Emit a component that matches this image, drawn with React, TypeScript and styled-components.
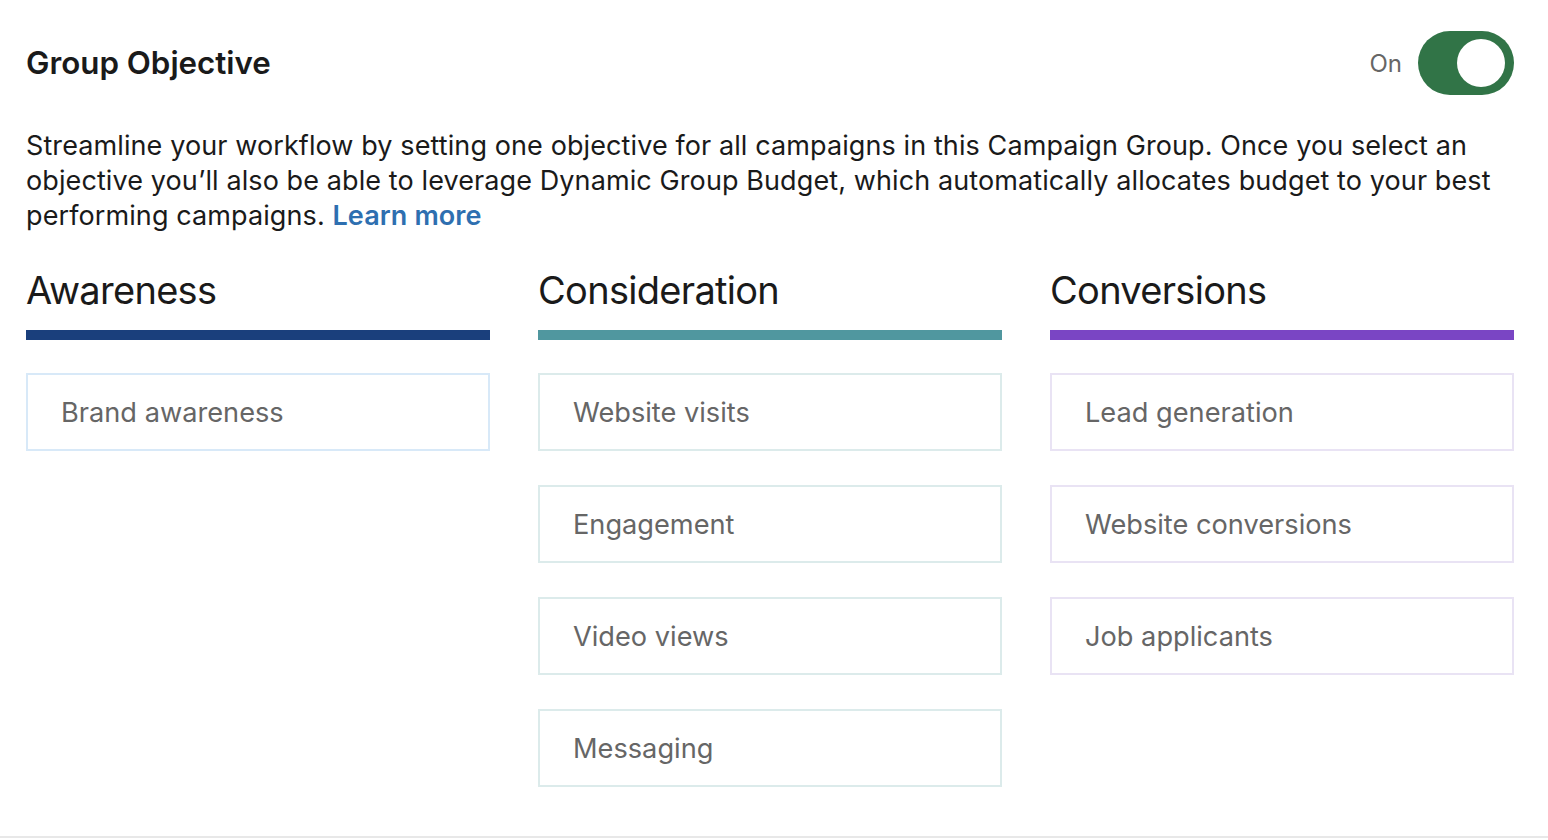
import React, { useState } from "react";
import styled, { createGlobalStyle } from "styled-components";

const GlobalStyle = createGlobalStyle`
  html, body {
    margin: 0;
    padding: 0;
    background: #ffffff;
  }
  body {
    font-family: Inter, "Noto Sans", "Liberation Sans", sans-serif;
    -webkit-font-smoothing: antialiased;
  }
`;

const Page = styled.div`
  box-sizing: border-box;
  width: 100%;
  padding: 31px 34px 49px 26px;
  border-bottom: 2px solid #e8e8e8;
`;

const HeaderRow = styled.div`
  display: flex;
  align-items: center;
  justify-content: space-between;
  height: 64px;
`;

const Title = styled.h2`
  margin: 0;
  font-size: 31.3px;
  font-weight: 600;
  color: #1a1a1a;
`;

const ToggleWrap = styled.label`
  display: flex;
  align-items: center;
  gap: 16px;
  cursor: pointer;
`;

const ToggleLabel = styled.span`
  font-size: 24px;
  color: #666666;
`;

const Track = styled.button<{ $on: boolean }>`
  position: relative;
  width: 96px;
  height: 64px;
  border: none;
  border-radius: 32px;
  padding: 0;
  background: ${(p) => (p.$on ? "#317447" : "#8c8c8c")};
  cursor: pointer;
`;

const Knob = styled.span<{ $on: boolean }>`
  position: absolute;
  top: 8px;
  left: ${(p) => (p.$on ? "39px" : "8px")};
  width: 48px;
  height: 48px;
  border-radius: 50%;
  background: #ffffff;
  transition: left 0.15s ease;
`;

const Description = styled.p`
  margin: 33px 0 0;
  font-size: 27px;
  line-height: 35px;
  color: #1a1a1a;
  letter-spacing: 0.1px;
`;

const LearnMore = styled.a`
  color: #2e6fb0;
  font-weight: 600;
  text-decoration: none;
`;

const Columns = styled.div`
  display: grid;
  grid-template-columns: repeat(3, 1fr);
  column-gap: 48px;
  margin-top: 35px;
`;

const Column = styled.div`
  display: flex;
  flex-direction: column;
`;

const ColumnTitle = styled.h3`
  margin: 0;
  font-size: 38px;
  line-height: 44px;
  font-weight: 400;
  color: #1a1a1a;
  letter-spacing: -0.7px;
`;

const Bar = styled.div<{ $color: string }>`
  height: 10px;
  margin-top: 18px;
  background: ${(p) => p.$color};
`;

const CardList = styled.div`
  display: flex;
  flex-direction: column;
  gap: 34px;
  margin-top: 33px;
`;

const Card = styled.button<{ $border: string }>`
  box-sizing: border-box;
  display: flex;
  align-items: center;
  height: 78px;
  padding: 0 0 0 33px;
  background: #ffffff;
  border: 2px solid ${(p) => p.$border};
  font-family: inherit;
  font-size: 27.2px;
  color: #666666;
  text-align: left;
  cursor: pointer;
`;

type Group = {
  title: string;
  color: string;
  border: string;
  items: string[];
};

const groups: Group[] = [
  {
    title: "Awareness",
    color: "#1a3f7c",
    border: "#d8e9f8",
    items: ["Brand awareness"],
  },
  {
    title: "Consideration",
    color: "#50979f",
    border: "#dcebeb",
    items: ["Website visits", "Engagement", "Video views", "Messaging"],
  },
  {
    title: "Conversions",
    color: "#7a45c4",
    border: "#e9e3f4",
    items: ["Lead generation", "Website conversions", "Job applicants"],
  },
];

export default function App() {
  const [on, setOn] = useState(true);
  return (
    <>
      <GlobalStyle />
      <Page>
        <HeaderRow>
          <Title>Group Objective</Title>
          <ToggleWrap>
            <ToggleLabel>{on ? "On" : "Off"}</ToggleLabel>
            <Track $on={on} onClick={() => setOn(!on)} aria-pressed={on}>
              <Knob $on={on} />
            </Track>
          </ToggleWrap>
        </HeaderRow>
        <Description>
          Streamline your workflow by setting one objective for all campaigns in this Campaign
          Group. Once you select an objective you’ll also be able to leverage Dynamic Group
          Budget, which automatically allocates budget to your best performing campaigns.{" "}
          <LearnMore href="#">Learn more</LearnMore>
        </Description>
        <Columns>
          {groups.map((g) => (
            <Column key={g.title}>
              <ColumnTitle>{g.title}</ColumnTitle>
              <Bar $color={g.color} />
              <CardList>
                {g.items.map((item) => (
                  <Card key={item} $border={g.border}>
                    {item}
                  </Card>
                ))}
              </CardList>
            </Column>
          ))}
        </Columns>
      </Page>
    </>
  );
}
